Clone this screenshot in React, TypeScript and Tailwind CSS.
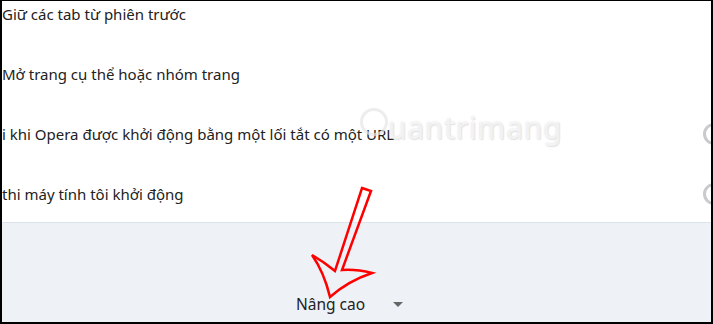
import React from "react"

const rows = [
  { text: "Giữ các tab từ phiên trước", radio: false },
  { text: "Mở trang cụ thể hoặc nhóm trang", radio: false },
  { text: "i khi Opera được khởi động bằng một lối tắt có một URL", radio: true },
  { text: "thi máy tính tôi khởi động", radio: true },
]

export default function App() {
  return (
    <div
      className="relative w-[713px] h-[324px] flex flex-col overflow-hidden bg-white border-t border-l-2 border-r-2 border-b-2 border-black"
      style={{ fontFamily: '"Noto Sans", "Open Sans", sans-serif' }}
    >
      <div className="h-[221px] overflow-hidden">
        <div className="-mt-[17px] flex flex-col">
          {rows.map((row, i) => (
            <div key={i} className="h-[60px] flex items-center">
              <span className="flex-1 text-[15px] text-[#222] whitespace-nowrap">{row.text}</span>
              {row.radio && (
                <span className="shrink-0 w-[22px] h-[22px] -mr-[14px] rounded-full border-[3px] border-[#c9c9ce]" />
              )}
            </div>
          ))}
        </div>
      </div>

      <div className="flex-1 bg-[#eef1f5] border-t border-[#dde3ea] flex items-end pl-[294px] pb-[6px]">
        <div className="flex items-center gap-[28px]">
          <span className="text-[15.5px] text-[#222]">Nâng cao</span>
          <span className="w-0 h-0 border-l-[5px] border-r-[5px] border-t-[5px] border-l-transparent border-r-transparent border-t-[#666]" />
        </div>
      </div>

      {/* watermark */}
      <div className="absolute left-[358px] top-[100px] flex items-center pointer-events-none opacity-70">
        <span className="w-[28px] h-[28px] rounded-full border-[3px] border-[#e6e6e6]" />
        <span className="text-[30px] leading-none mt-[12px] text-white/60 [text-shadow:0_0_2px_#d0d0d0,1px_1px_1px_#dcdcdc] tracking-wide">
          uantrimang
        </span>
      </div>

      {/* red arrow */}
      <svg className="absolute left-[-2px] top-[-1px] pointer-events-none" width="713" height="324" viewBox="0 0 713 324">
        <path
          d="M362 188 L371 191 L342 270 Q356 269 372 273 Q348 281 330 297 Q324 272 312 255 Q324 262 335 271 Z"
          fill="none"
          stroke="#ff0000"
          strokeWidth="2.5"
          strokeLinejoin="miter"
        />
      </svg>
    </div>
  )
}
